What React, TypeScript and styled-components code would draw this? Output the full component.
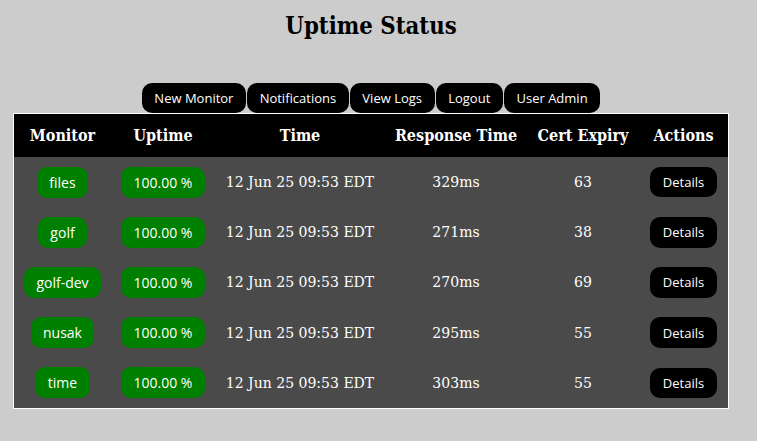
import React from "react";
import styled, { createGlobalStyle } from "styled-components";

const Global = createGlobalStyle`
  html, body { margin: 0; padding: 0; background: #cccccc; }
  body { font-family: "DejaVu Serif Condensed", "DejaVu Serif", serif; }
`;

const Page = styled.div`
  width: 716px;
  padding-left: 13px;
  display: flex;
  flex-direction: column;
  align-items: center;
`;

const Title = styled.h1`
  margin: 12px 0 0;
  font-family: "DejaVu Serif Condensed", "DejaVu Serif", serif;
  font-size: 23.7px;
  font-weight: bold;
  color: #000;
  line-height: 28px;
`;

const Nav = styled.div`
  margin-top: 43px;
  display: flex;
  gap: 1px;
`;

const NavButton = styled.button`
  height: 30px;
  padding: 0 12.6px;
  border: none;
  border-radius: 10px;
  background: #000;
  color: #fff;
  font-family: "Open Sans", sans-serif;
  font-size: 13px;
  cursor: pointer;
`;

const Table = styled.table`
  width: 716px;
  border: 1px solid #fff;
  border-collapse: collapse;
  table-layout: fixed;
  background: #4a4a4a;
  color: #fff;
`;

const HeadCell = styled.th<{ $w: number }>`
  width: ${(p) => p.$w}px;
  height: 43px;
  padding: 0;
  background: #000;
  font-family: "DejaVu Serif Condensed", "DejaVu Serif", serif;
  font-size: 16px;
  font-weight: bold;
  text-align: center;
`;

const Cell = styled.td`
  height: 50.2px;
  padding: 0;
  text-align: center;
  vertical-align: middle;
  font-family: "DejaVu Serif Condensed", "DejaVu Serif", serif;
  font-size: 15.6px;
`;

const Pill = styled.span`
  display: inline-flex;
  align-items: center;
  height: 31px;
  padding: 0 12.5px;
  border-radius: 10px;
  background: #008000;
  color: #fff;
  font-family: "Open Sans", sans-serif;
  font-size: 14px;
`;

const DetailsButton = styled.button`
  height: 30.5px;
  padding: 0 13px;
  border: none;
  border-radius: 10px;
  background: #000;
  color: #fff;
  font-family: "Open Sans", sans-serif;
  font-size: 13px;
  cursor: pointer;
`;

const cols = [
  { label: "Monitor", w: 97 },
  { label: "Uptime", w: 104 },
  { label: "Time", w: 170 },
  { label: "Response Time", w: 142 },
  { label: "Cert Expiry", w: 112 },
  { label: "Actions", w: 89 },
];

const rows = [
  { name: "files", rt: 329, exp: 63 },
  { name: "golf", rt: 271, exp: 38 },
  { name: "golf-dev", rt: 270, exp: 69 },
  { name: "nusak", rt: 295, exp: 55 },
  { name: "time", rt: 303, exp: 55 },
];

export default function App() {
  return (
    <>
      <Global />
      <Page>
        <Title>Uptime Status</Title>
        <Nav>
          {["New Monitor", "Notifications", "View Logs", "Logout", "User Admin"].map((l) => (
            <NavButton key={l}>{l}</NavButton>
          ))}
        </Nav>
        <Table>
          <thead>
            <tr>
              {cols.map((c) => (
                <HeadCell key={c.label} $w={c.w}>{c.label}</HeadCell>
              ))}
            </tr>
          </thead>
          <tbody>
            {rows.map((r) => (
              <tr key={r.name}>
                <Cell><Pill>{r.name}</Pill></Cell>
                <Cell><Pill>100.00 %</Pill></Cell>
                <Cell>12 Jun 25 09:53 EDT</Cell>
                <Cell>{r.rt}ms</Cell>
                <Cell>{r.exp}</Cell>
                <Cell><DetailsButton>Details</DetailsButton></Cell>
              </tr>
            ))}
          </tbody>
        </Table>
      </Page>
    </>
  );
}
